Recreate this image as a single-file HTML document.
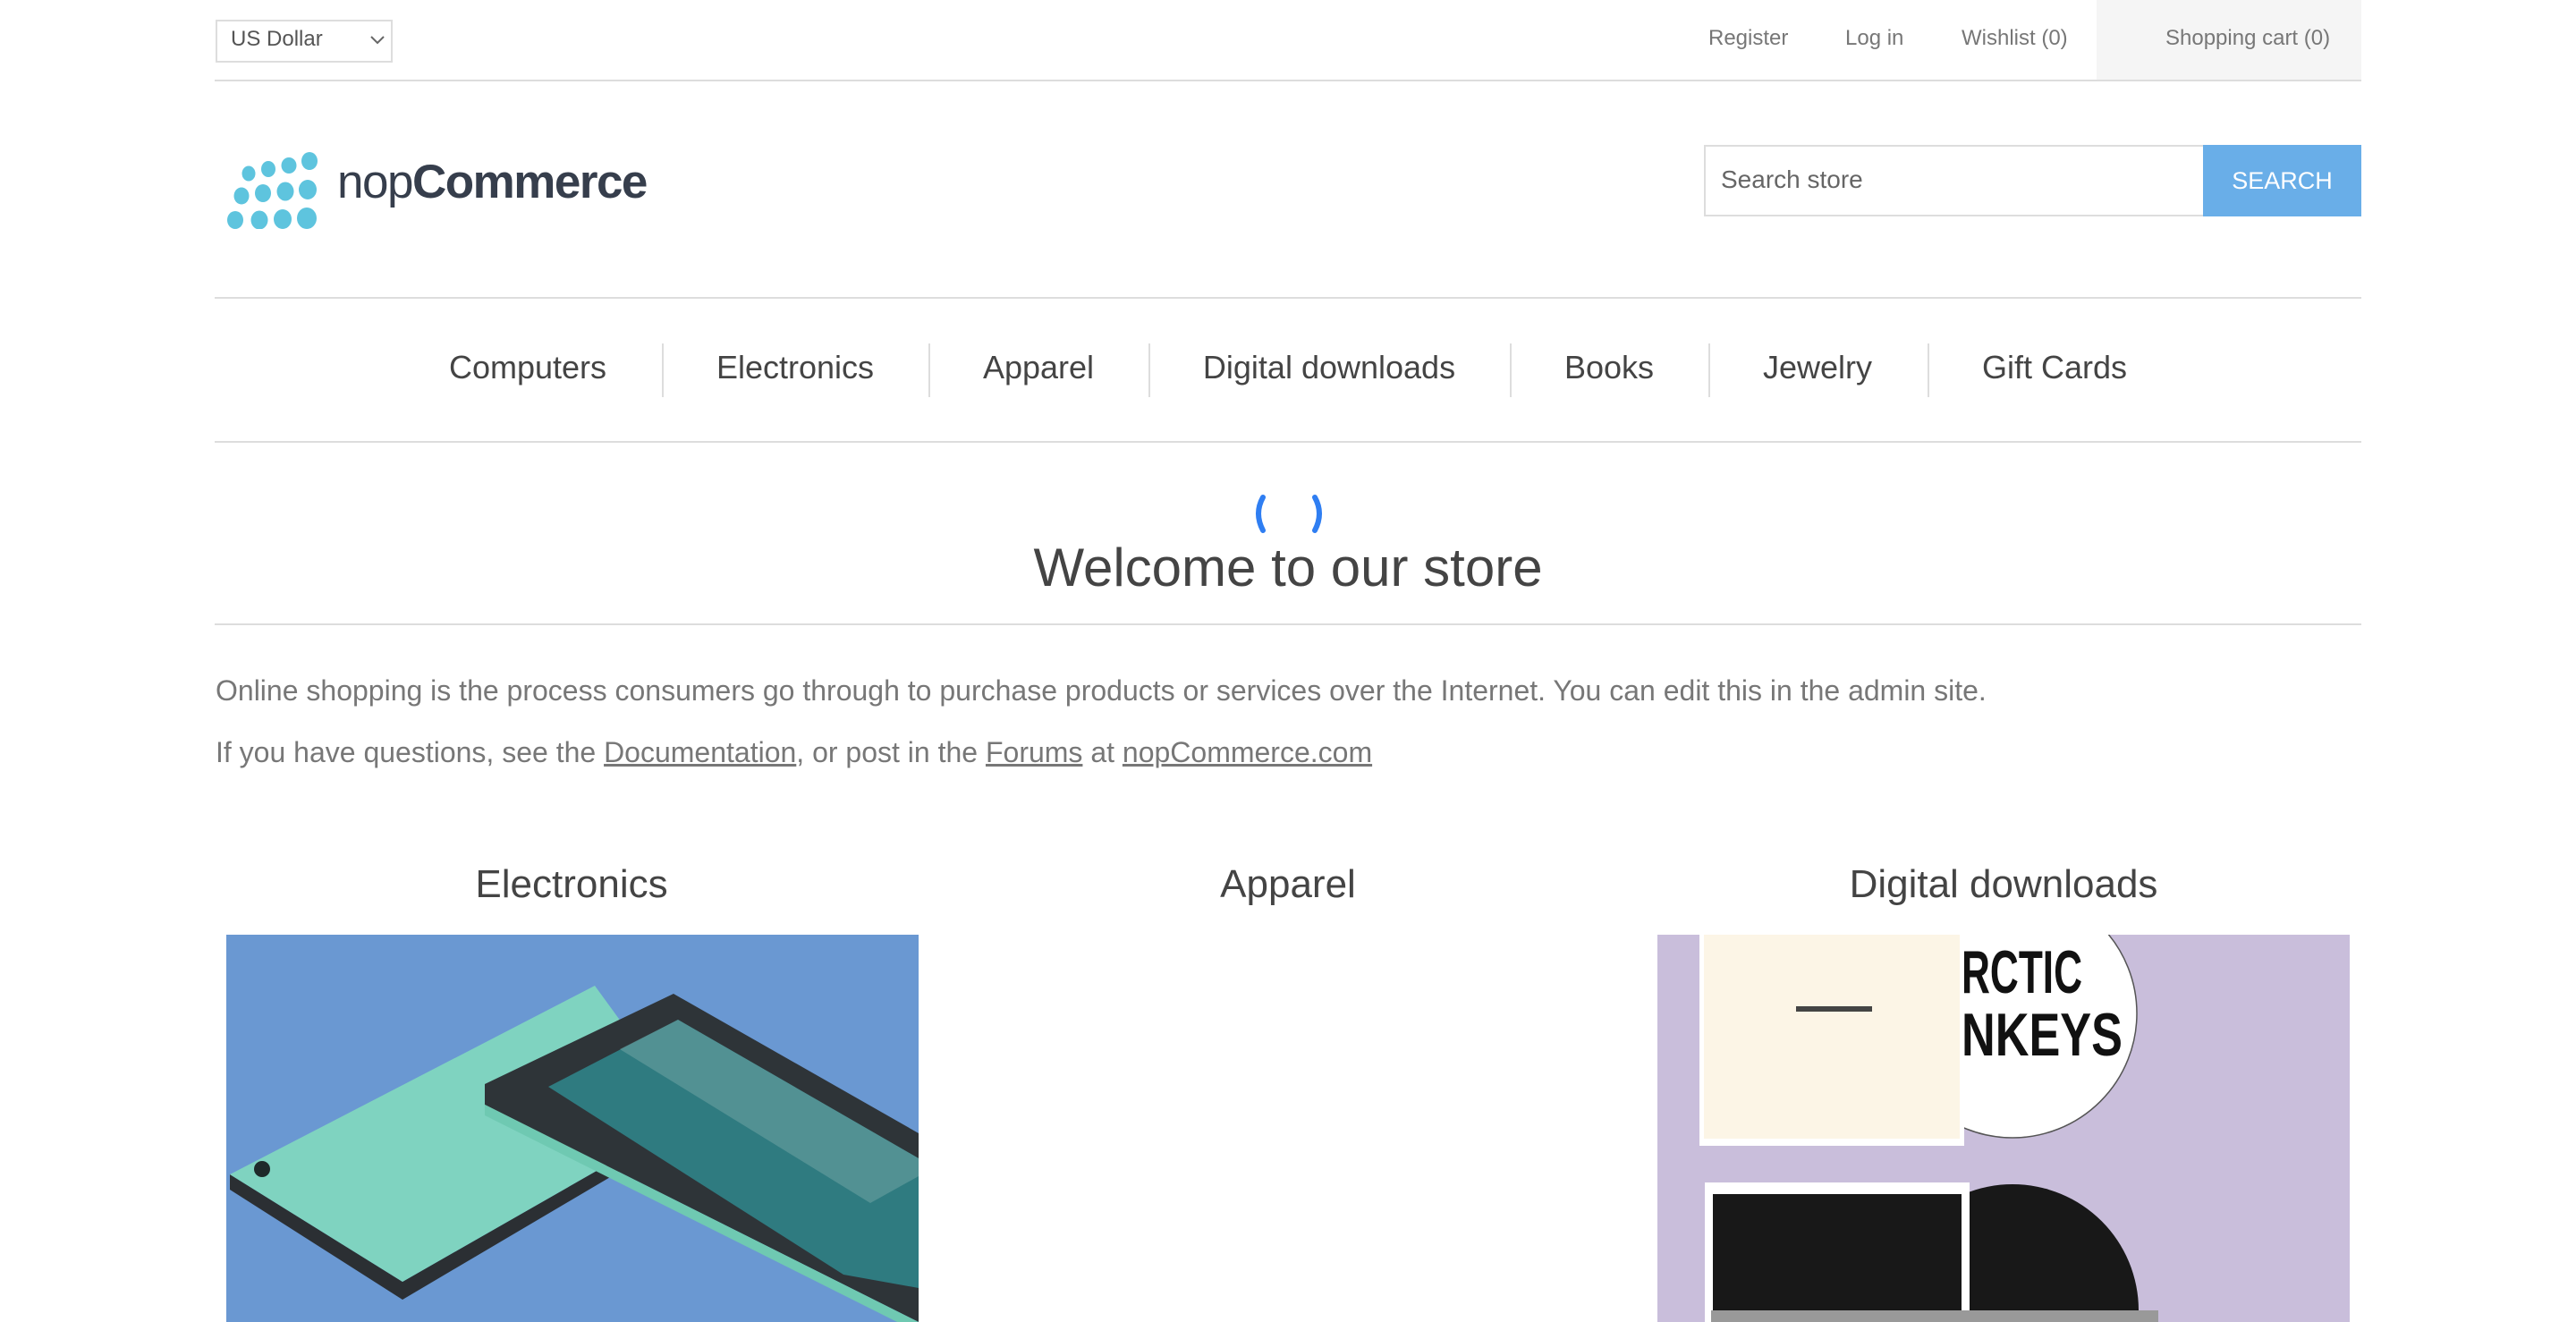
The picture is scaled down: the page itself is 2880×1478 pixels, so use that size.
<!DOCTYPE html>
<html><head><meta charset="utf-8"><style>
*{margin:0;padding:0;box-sizing:border-box}
html,body{width:2880px;height:1478px;overflow:hidden}
body{background:#fff;font-family:"Liberation Sans",Arial,sans-serif;position:relative;color:#444}
.a{position:absolute}
.hl{position:absolute;height:2px;background:#ddd;left:240px;width:2400px}
.top{font-size:24px;color:#777;top:29px;white-space:nowrap}
.nav{position:absolute;top:390px;font-size:36px;color:#444;transform:translateX(-50%);white-space:nowrap}
.sep{position:absolute;top:384px;width:2px;height:60px;background:#ddd}
.ct{position:absolute;top:964px;font-size:44px;color:#444;transform:translateX(-50%);white-space:nowrap}
p{position:absolute;left:241px;font-size:32px;color:#777;white-space:nowrap}
p a{color:#777;text-decoration:underline}
</style></head><body>
<div class="a" style="left:241px;top:22px;width:198px;height:48px;border:2px solid #ddd;"></div>
<div class="a top" style="left:258px;top:30px;color:#555">US Dollar</div>
<svg class="a" style="left:413px;top:38px" width="18" height="14"><path d="M2 3 L9 10 L16 3" fill="none" stroke="#666" stroke-width="2"/></svg>
<div class="a" style="left:2344px;top:0;width:296px;height:90px;background:#f5f5f5"></div>
<div class="a top" style="left:1910px">Register</div>
<div class="a top" style="left:2063px">Log in</div>
<div class="a top" style="left:2193px">Wishlist (0)</div>
<div class="a top" style="left:2421px">Shopping cart (0)</div>
<div class="hl" style="top:89px"></div>

<svg class="a" style="left:244px;top:168px" width="115" height="88">
<g fill="#5ec4de">
<ellipse cx="102" cy="12" rx="9" ry="10"/><ellipse cx="79" cy="17" rx="8.5" ry="9"/><ellipse cx="56" cy="21" rx="8" ry="9"/><ellipse cx="34" cy="26" rx="7.5" ry="8.5"/>
<ellipse cx="100" cy="44" rx="10" ry="11"/><ellipse cx="75" cy="46" rx="9.5" ry="10.5"/><ellipse cx="50" cy="48" rx="9" ry="10"/><ellipse cx="26" cy="51" rx="8.5" ry="9.5"/>
<ellipse cx="99" cy="76" rx="11" ry="12"/><ellipse cx="72" cy="77" rx="10" ry="11"/><ellipse cx="46" cy="78" rx="9.5" ry="10.5"/><ellipse cx="19" cy="78" rx="9" ry="10"/>
</g></svg>
<div class="a" style="left:377px;top:173px;font-size:53px;color:#363e4c;letter-spacing:-1.5px;white-space:nowrap">nop<b>Commerce</b></div>

<div class="a" style="left:1905px;top:162px;width:560px;height:80px;border:2px solid #ddd"></div>
<div class="a" style="left:1924px;top:185px;font-size:28px;color:#666">Search store</div>
<div class="a" style="left:2463px;top:162px;width:177px;height:80px;background:#69aee8;color:#fff;font-size:27px;text-align:center;line-height:80px">SEARCH</div>

<div class="hl" style="top:332px"></div>
<div class="nav" style="left:590px">Computers</div>
<div class="sep" style="left:740px"></div>
<div class="nav" style="left:889px">Electronics</div>
<div class="sep" style="left:1038px"></div>
<div class="nav" style="left:1161px">Apparel</div>
<div class="sep" style="left:1284px"></div>
<div class="nav" style="left:1486px">Digital downloads</div>
<div class="sep" style="left:1688px"></div>
<div class="nav" style="left:1799px">Books</div>
<div class="sep" style="left:1910px"></div>
<div class="nav" style="left:2032px">Jewelry</div>
<div class="sep" style="left:2155px"></div>
<div class="nav" style="left:2297px">Gift Cards</div>
<div class="hl" style="top:493px"></div>

<svg class="a" style="left:1396px;top:552px" width="90" height="46">
<path d="M16 4 Q6 22 16 41" fill="none" stroke="#2f7ef2" stroke-width="6" stroke-linecap="round"/>
<path d="M74 4 Q84 22 74 41" fill="none" stroke="#2f7ef2" stroke-width="6" stroke-linecap="round"/>
</svg>
<div class="a" style="left:1440px;top:600px;transform:translateX(-50%);font-size:60px;color:#444;white-space:nowrap">Welcome to our store</div>
<div class="hl" style="top:697px"></div>

<p style="top:754px">Online shopping is the process consumers go through to purchase products or services over the Internet. You can edit this in the admin site.</p>
<p style="top:823px">If you have questions, see the <a>Documentation</a>, or post in the <a>Forums</a> at <a>nopCommerce.com</a></p>

<div class="ct" style="left:639px">Electronics</div>
<div class="ct" style="left:1440px">Apparel</div>
<div class="ct" style="left:2240px">Digital downloads</div>

<svg class="a" style="left:253px;top:1045px" width="774" height="433">
<rect width="774" height="433" fill="#6a98d2"/>
<polygon points="4,268 4,285 197,408 519,218 519,204 197,388" fill="#2b2f33"/>
<polygon points="412,57 4,268 197,388 519,204" fill="#7fd3c0"/>
<polygon points="500,66 289,167 289,190 774,433 774,222" fill="#2e3438"/>
<polygon points="289,190 774,433 774,445 289,202" fill="#6fc9b2"/>
<polygon points="505,95 360,170 690,380 774,395 774,250" fill="#2f7b80"/>
<polygon points="505,95 440,128 720,300 774,270 774,250" fill="#6aa0a0" opacity=".6"/>
<circle cx="40" cy="262" r="9" fill="#1e2a2a"/>
</svg>

<svg class="a" style="left:1853px;top:1045px" width="774" height="433">
<rect width="774" height="433" fill="#c9bedb"/>
<circle cx="397" cy="88" r="139" fill="#fff" stroke="#555" stroke-width="1.5"/>
<text x="340" y="65" font-family="Liberation Sans" font-weight="bold" font-size="68" fill="#111" textLength="135" lengthAdjust="spacingAndGlyphs">RCTIC</text>
<text x="340" y="135" font-family="Liberation Sans" font-weight="bold" font-size="68" fill="#111" textLength="180" lengthAdjust="spacingAndGlyphs">NKEYS</text>
<rect x="47" y="0" width="296" height="236" fill="#fff"/>
<rect x="52" y="0" width="286" height="228" fill="#fcf5e6"/>
<rect x="155" y="80" width="85" height="6" fill="#444"/>
<circle cx="397" cy="420" r="141" fill="#181818"/>
<rect x="53" y="277" width="296" height="160" fill="#fff"/>
<rect x="62" y="290" width="278" height="150" fill="#181818"/>
<rect x="60" y="420" width="500" height="13" fill="#999"/>
</svg>
</body></html>
